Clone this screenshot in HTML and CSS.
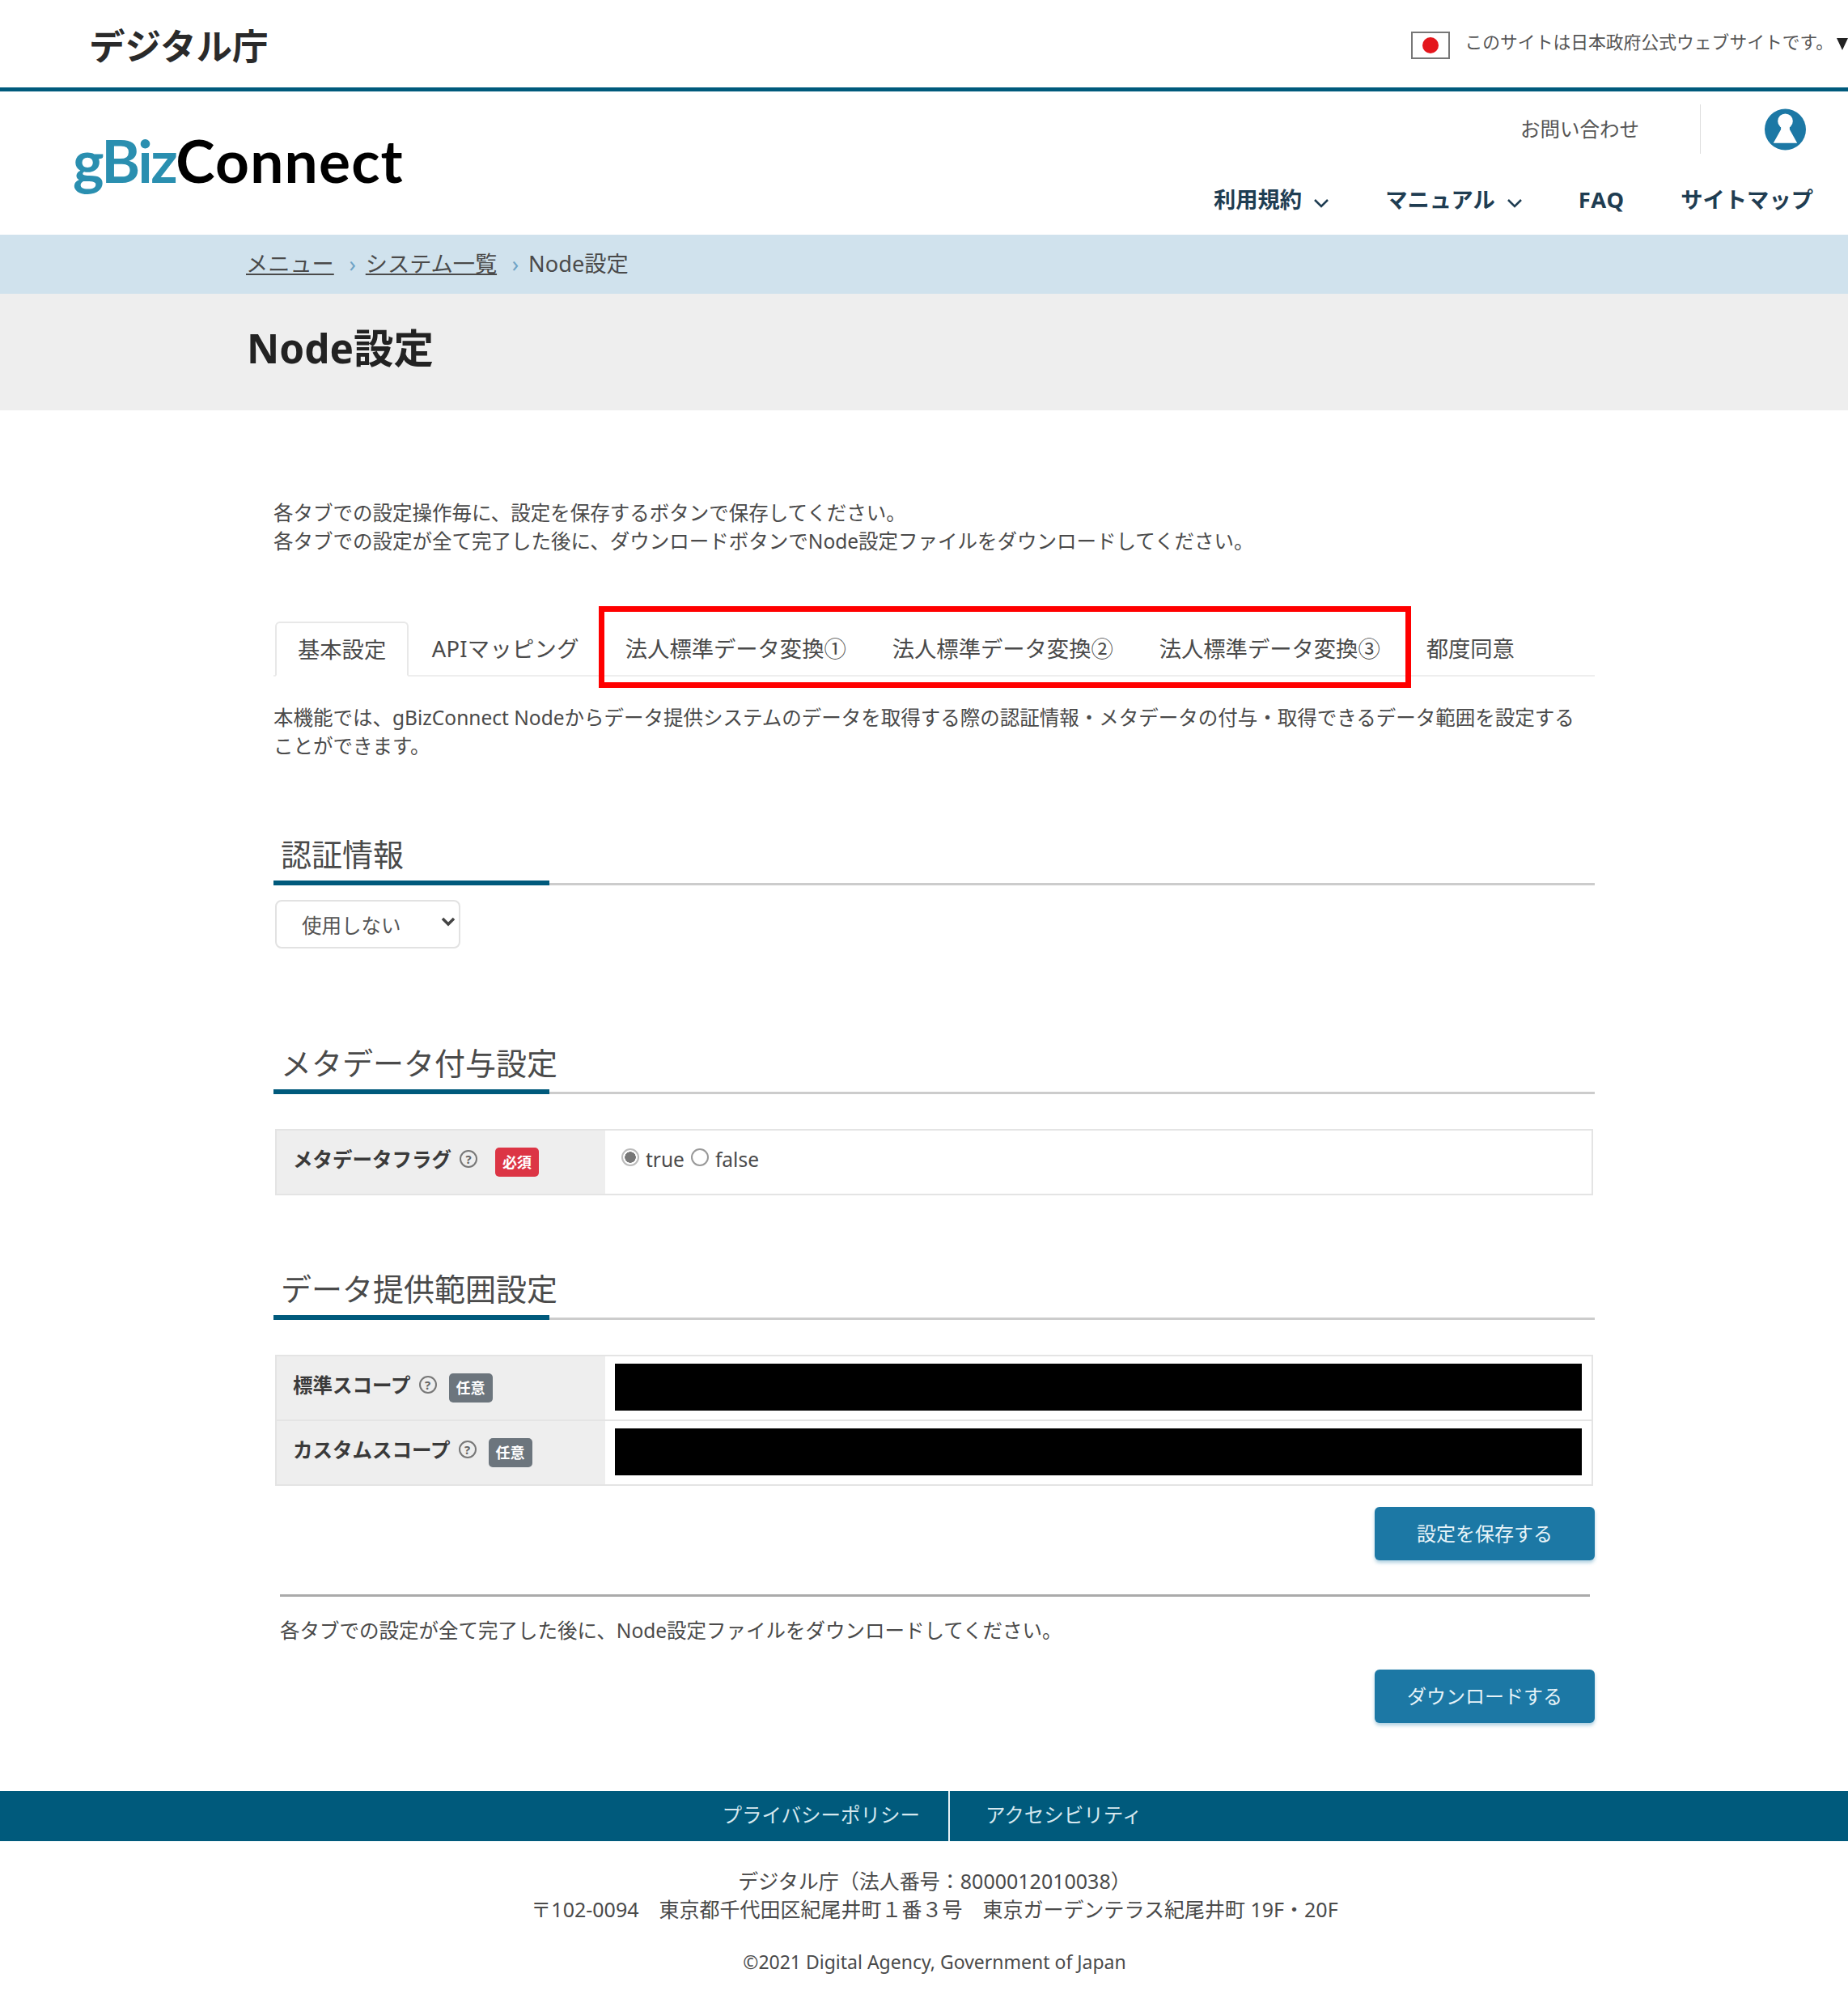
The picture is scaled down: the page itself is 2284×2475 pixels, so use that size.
FILE: index.html
```html
<!DOCTYPE html>
<html lang="ja">

<head>
    <meta charset="UTF-8">
    <meta name="viewport" content="width=device-width, initial-scale=1.0">
    <title>Node設定</title>
    <link rel="stylesheet" href="styles.css">
</head>

<body>
    <div class="gov-bar">
        <div class="agency">デジタル庁</div>
        <div class="gov-note">
            <span class="flag"><span class="flag-sun"></span></span>
            <span class="gov-text">このサイトは日本政府公式ウェブサイトです。</span>
            <span class="gov-arrow"></span>
        </div>
    </div>

    <header class="site-header">
        <div class="logo"><span class="logo-biz">gBiz</span><span class="logo-connect">Connect</span></div>
        <div class="header-right">
            <div class="header-top">
                <a class="contact" href="#">お問い合わせ</a>
                <span class="user-icon">
                    <svg width="52" height="52" viewBox="0 0 52 52">
                        <circle cx="26" cy="26" r="26" fill="#1c78a5"/>
                        <circle cx="26" cy="15.500" r="9.500" fill="#fff"/>
                        <path d="M20.500 21v5L11 43h30l-9.500-17v-5z" fill="#fff"/>
                    </svg>
                </span>
            </div>
            <nav class="main-nav">
                <a href="#">利用規約<svg class="chevron" width="20" height="12" viewBox="0 0 20 12"><path d="M2 2l8 8 8-8" fill="none" stroke="#1f3d52" stroke-width="2.500"/></svg></a>
                <a href="#">マニュアル<svg class="chevron" width="20" height="12" viewBox="0 0 20 12"><path d="M2 2l8 8 8-8" fill="none" stroke="#1f3d52" stroke-width="2.500"/></svg></a>
                <a class="nav-faq" href="#">FAQ</a>
                <a href="#">サイトマップ</a>
            </nav>
        </div>
    </header>

    <div class="breadcrumb">
        <a href="#">メニュー</a>
        <span class="crumb-sep">›</span>
        <a href="#">システム一覧</a>
        <span class="crumb-sep">›</span>
        <span>Node設定</span>
    </div>

    <div class="page-title">
        <h1>Node設定</h1>
    </div>

    <main class="container">
        <p class="intro">各タブでの設定操作毎に、設定を保存するボタンで保存してください。<br>各タブでの設定が全て完了した後に、ダウンロードボタンでNode設定ファイルをダウンロードしてください。</p>

        <div class="tabs">
            <a class="tab active" href="#">基本設定</a>
            <a class="tab tab-api" href="#">APIマッピング</a>
            <a class="tab" href="#">法人標準データ変換①</a>
            <a class="tab" href="#">法人標準データ変換②</a>
            <a class="tab" href="#">法人標準データ変換③</a>
            <a class="tab" href="#">都度同意</a>
            <div class="highlight"></div>
        </div>

        <p class="description">本機能では、gBizConnect Nodeからデータ提供システムのデータを取得する際の認証情報・メタデータの付与・取得できるデータ範囲を設定する<br>ことができます。</p>

        <h2 class="section-title first">認証情報</h2>
        <div class="select-wrap">
            <select class="auth-select">
                <option>使用しない</option>
            </select>
            <svg class="select-arrow" width="18" height="12" viewBox="0 0 18 12"><path d="M2 2l7 7 7-7" fill="none" stroke="#444" stroke-width="3.500"/></svg>
        </div>

        <h2 class="section-title meta">メタデータ付与設定</h2>
        <table class="form-table">
            <tr>
                <th>
                    <div class="label">
                        <span class="label-text">メタデータフラグ</span>
                        <span class="help">?</span>
                        <span class="badge required">必須</span>
                    </div>
                </th>
                <td>
                    <div class="radios">
                        <input type="radio" name="flag" checked>
                        <span class="radio-text">true</span>
                        <input type="radio" name="flag">
                        <span class="radio-text">false</span>
                    </div>
                </td>
            </tr>
        </table>

        <h2 class="section-title scope-title">データ提供範囲設定</h2>
        <table class="form-table scope">
            <tr>
                <th>
                    <div class="label">
                        <span class="label-text">標準スコープ</span>
                        <span class="help">?</span>
                        <span class="badge">任意</span>
                    </div>
                </th>
                <td><div class="masked"></div></td>
            </tr>
            <tr>
                <th>
                    <div class="label">
                        <span class="label-text">カスタムスコープ</span>
                        <span class="help">?</span>
                        <span class="badge">任意</span>
                    </div>
                </th>
                <td><div class="masked"></div></td>
            </tr>
        </table>

        <div class="actions save">
            <button class="btn" type="button">設定を保存する</button>
        </div>

        <div class="download">
            <p>各タブでの設定が全て完了した後に、Node設定ファイルをダウンロードしてください。</p>
        </div>

        <div class="actions">
            <button class="btn" type="button">ダウンロードする</button>
        </div>
    </main>

    <footer>
        <div class="footer-nav">
            <a href="#">プライバシーポリシー</a>
            <a href="#">アクセシビリティ</a>
        </div>
        <div class="footer-info">
            <p>デジタル庁（法人番号：8000012010038）</p>
            <p>〒102-0094　東京都千代田区紀尾井町１番３号　東京ガーデンテラス紀尾井町 19F・20F</p>
            <p class="copyright">©2021 Digital Agency, Government of Japan</p>
        </div>
    </footer>
</body>

</html>
```

FILE: styles.css
```css
* {
    box-sizing: border-box;
}

body {
    margin: 0;
    overflow-x: hidden;
    font-family: "Noto Sans", "Noto Sans CJK JP", sans-serif;
    font-size: 24.500px;
    line-height: 35px;
    color: #4a4a4a;
    background: #fff;
}

a {
    color: inherit;
    text-decoration: none;
}

p {
    margin: 0;
}

.gov-bar {
    height: 113px;
    padding-left: 110px;
    display: flex;
    align-items: center;
    border-bottom: 5px solid #005a7c;
}

.agency {
    margin-top: 5px;
    font-size: 44.500px;
    font-weight: 700;
    line-height: 60px;
    color: #2a2a2a;
}

.gov-note {
    margin-left: auto;
    display: flex;
    align-items: center;
    font-size: 21.800px;
    color: #555;
}

.flag {
    width: 48px;
    height: 34px;
    margin-right: 18px;
    margin-top: 3px;
    border: 2px solid #777;
    display: flex;
    align-items: center;
    justify-content: center;
}

.flag-sun {
    width: 20px;
    height: 20px;
    border-radius: 50%;
    background: #e4161c;
}

.gov-text {
    margin-bottom: 6px;
}

.gov-arrow {
    width: 0;
    height: 0;
    margin: 0 0 0 4px;
    border-left: 7px solid transparent;
    border-right: 7px solid transparent;
    border-top: 15px solid #222;
}

.site-header {
    height: 177px;
    display: flex;
    justify-content: space-between;
}

.logo {
    margin: 40px 0 0 90px;
    font-family: "Lato", sans-serif;
    font-size: 73px;
    font-weight: 700;
    line-height: 90px;
    color: #000;
}

.logo-biz {
    color: #2a8fb0;
    letter-spacing: -2.500px;
}

.logo-connect {
    letter-spacing: 1.200px;
}

.header-right {
    padding-right: 43px;
    display: flex;
    flex-direction: column;
    align-items: flex-end;
}

.header-top {
    margin-top: 16px;
    margin-right: 9px;
    height: 61px;
    display: flex;
    align-items: center;
}

.contact {
    width: 222px;
    color: #555;
}

.user-icon {
    width: 131px;
    height: 61px;
    padding-left: 79px;
    display: flex;
    align-items: center;
    border-left: 1px solid #ddd;
}

.main-nav {
    margin-top: 37px;
    display: flex;
    gap: 69px;
    font-size: 27.300px;
    font-weight: 700;
    line-height: 40px;
    color: #1f3d52;
}

.nav-faq {
    letter-spacing: 1px;
}

.chevron {
    margin-left: 14px;
}

.breadcrumb {
    height: 73px;
    padding: 0 0 3px 304px;
    display: flex;
    align-items: center;
    background: #d0e2ed;
    font-size: 27.200px;
}

.breadcrumb a {
    text-decoration: underline;
}

.crumb-sep {
    width: 39px;
    padding-left: 7px;
    text-align: center;
    color: #6fa3c6;
}

.page-title {
    height: 144px;
    padding-left: 305px;
    display: flex;
    align-items: center;
    background: #eee;
}

.page-title h1 {
    margin: 0 0 10px;
    font-size: 49.500px;
    font-weight: 700;
    line-height: 60px;
    color: #222;
}

.container {
    width: 1633px;
    margin-left: 338px;
    padding-top: 109px;
}

.tabs {
    position: relative;
    margin-top: 82px;
    display: flex;
    border-bottom: 2px solid #eee;
    font-size: 27.300px;
}

.tab {
    height: 66px;
    padding: 0 28.500px;
    display: flex;
    align-items: center;
    white-space: nowrap;
}

.tab-api {
    letter-spacing: 0.300px;
}

.tab.active {
    margin-left: 2px;
    margin-bottom: -2px;
    height: 68px;
    padding: 0 26px;
    border: 2px solid #e8e8e8;
    border-bottom-color: #fff;
    border-radius: 6px 6px 0 0;
}

/* red box drawn over the three conversion tabs */
.highlight {
    position: absolute;
    left: 402px;
    top: -19px;
    width: 1004px;
    height: 101px;
    border: 7px solid #f00;
}

.description {
    margin-top: 33px;
}

.section-title {
    position: relative;
    margin: 91px 0 0;
    padding: 0 0 11px 9px;
    border-bottom: 3px solid #ccc;
    font-size: 38px;
    font-weight: 400;
    line-height: 50px;
    color: #4a4a4a;
}

.section-title::after {
    content: "";
    position: absolute;
    left: 0;
    bottom: -3px;
    width: 341px;
    height: 6px;
    background: #005a7c;
}

.section-title.first {
    margin-top: 91px;
}

.section-title.meta {
    margin-top: 116px;
}

.section-title.scope-title {
    margin-top: 90px;
}

.select-wrap {
    position: relative;
    width: 229px;
    margin: 18px 0 0 2px;
}

.auth-select {
    display: block;
    width: 229px;
    height: 60px;
    padding: 3px 0 0 31px;
    appearance: none;
    border: 2px solid #e2e2e2;
    border-radius: 8px;
    background: #fff;
    font-family: inherit;
    font-size: 24.500px;
    color: #555;
}

.select-arrow {
    position: absolute;
    right: 6px;
    top: 21px;
}

.form-table {
    width: 1629px;
    margin: 43px 0 0 2px;
    border-collapse: collapse;
    border: 2px solid #e4e4e4;
}

.form-table.scope {
    margin-top: 43px;
}

.form-table tr + tr {
    border-top: 2px solid #e4e4e4;
}

.form-table th {
    width: 407px;
    height: 80px;
    padding: 0 0 0 20px;
    background: #eee;
    text-align: left;
}

.form-table td {
    padding: 0 12px 2px 12px;
}

.label {
    display: flex;
    align-items: center;
}

.label-text {
    margin-bottom: 8px;
    font-weight: 700;
    color: #3a3a3a;
}

.help {
    width: 22px;
    height: 22px;
    margin: 0 0 8px 10px;
    border: 2px solid #777;
    border-radius: 50%;
    display: flex;
    align-items: center;
    justify-content: center;
    font-size: 15px;
    font-weight: 700;
    line-height: 18px;
    color: #666;
}

.badge {
    width: 54px;
    height: 36px;
    margin-left: 15px;
    border-radius: 5px;
    display: flex;
    align-items: center;
    justify-content: center;
    background: #6c757d;
    font-size: 18px;
    font-weight: 700;
    line-height: 20px;
    color: #fff;
}

.badge.required {
    margin-left: 22px;
    background: #dc3545;
}

.radios {
    display: flex;
    align-items: center;
    margin-bottom: 6px;
    padding-left: 8px;
}

.radios input {
    width: 22px;
    height: 22px;
    margin: 0 8px 4px 0;
    appearance: none;
    border: 2px solid #999;
    border-radius: 50%;
    background: #fff;
}

.radios input:checked {
    border-color: #bbb;
    background: radial-gradient(circle, #777 0 6.500px, #fff 7px);
}

.radio-text {
    margin-right: 8px;
}

.masked {
    height: 58px;
    background: #000;
}

.actions {
    margin-top: 31px;
    display: flex;
    justify-content: flex-end;
}

.actions.save {
    margin-top: 26px;
}

.btn {
    width: 272px;
    height: 66px;
    padding: 0 0 4px;
    border: 0;
    border-radius: 6px;
    background: #1c78a5;
    box-shadow: 0 3px 4px rgba(28, 120, 165, 0.35);
    font-family: inherit;
    font-size: 24px;
    color: #e6f3f8;
}

.download {
    margin: 42px 6px 0 8px;
    padding-top: 24px;
    border-top: 3px solid #aaa;
}

footer {
    margin-top: 84px;
}

.footer-nav {
    height: 62px;
    padding-left: 20px;
    display: flex;
    justify-content: center;
    align-items: center;
    background: #005a7c;
    color: #d5e8ef;
}

.footer-nav a {
    height: 62px;
    padding: 0 35px 4px 0;
    display: flex;
    align-items: center;
}

.footer-nav a + a {
    padding: 0 0 4px 44px;
    border-left: 2px solid #e6f0f4;
}

.footer-info {
    padding: 32px 0 0 26px;
    font-size: 25px;
    text-align: center;
}

.copyright {
    margin-top: 30px;
    font-size: 23px;
}
```
